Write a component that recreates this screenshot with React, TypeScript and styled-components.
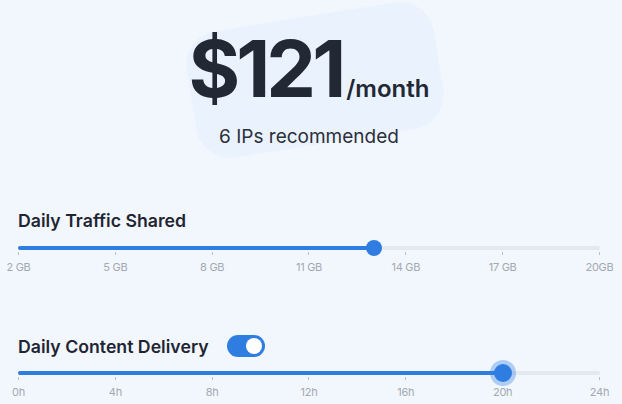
import React from "react";
import styled, { createGlobalStyle } from "styled-components";

const Global = createGlobalStyle`
  html, body { margin: 0; padding: 0; background: #f2f7fd; }
  body { font-family: Inter, "Noto Sans", sans-serif; color: #1f2532; }
  * { box-sizing: border-box; }
`;

const Page = styled.div`
  width: 622px;
  height: 404px;
  overflow: hidden;
  display: flex;
  flex-direction: column;
  padding: 0 22px 0 18px;
`;

const Hero = styled.div`
  position: relative;
  display: flex;
  flex-direction: column;
  align-items: center;
  padding-top: 29px;
  height: 206px;
`;

const Blob = styled.div`
  position: absolute;
  left: 172px;
  top: 16px;
  width: 250px;
  height: 128px;
  background: #eaf2fd;
  border-radius: 34px;
  transform: rotate(-9deg);
  z-index: 0;
`;

const PriceRow = styled.div`
  position: relative;
  z-index: 1;
  display: flex;
  align-items: baseline;
  gap: 4px;
`;

const Amount = styled.span`
  font-size: 79px;
  font-weight: 700;
  letter-spacing: -4px;
  line-height: 1;
  color: #222834;
`;

const Per = styled.span`
  font-size: 24px;
  font-weight: 600;
  color: #222834;
`;

const Sub = styled.div`
  position: relative;
  z-index: 1;
  margin-top: 17px;
  font-size: 19px;
  font-weight: 400;
  color: #2b303b;
`;

const Section = styled.div<{ h: number }>`
  display: flex;
  flex-direction: column;
  height: ${(p) => p.h}px;
`;

const TitleRow = styled.div`
  display: flex;
  align-items: center;
  gap: 18px;
  height: 28px;
`;

const Title = styled.div`
  font-size: 17.7px;
  font-weight: 600;
  color: #1f2532;
`;

const Toggle = styled.div`
  width: 38px;
  height: 22px;
  border-radius: 11px;
  background: #2f7de1;
  display: flex;
  align-items: center;
  justify-content: flex-end;
  padding: 3px;
`;

const Knob = styled.div`
  width: 16px;
  height: 16px;
  border-radius: 50%;
  background: #ffffff;
`;

const SliderWrap = styled.div<{ mt: number }>`
  position: relative;
  height: 34px;
  margin-top: ${(p) => p.mt}px;
`;

const Track = styled.div`
  position: absolute;
  left: 0;
  right: 0;
  top: 6px;
  height: 4px;
  border-radius: 2px;
  background: #e3e9f0;
`;

const Fill = styled.div`
  height: 100%;
  border-radius: 2px;
  background: #2f7de1;
`;

const Thumb = styled.div<{ halo: boolean }>`
  position: absolute;
  top: 8px;
  width: ${(p) => (p.halo ? 18 : 16)}px;
  height: ${(p) => (p.halo ? 18 : 16)}px;
  margin-left: ${(p) => (p.halo ? -9 : -8)}px;
  margin-top: ${(p) => (p.halo ? -9 : -8)}px;
  border-radius: 50%;
  background: #2f7de1;
  box-shadow: ${(p) => (p.halo ? "0 0 0 4px rgba(47,125,225,0.35)" : "none")};
`;

const Ticks = styled.div`
  position: absolute;
  left: 0;
  right: 0;
  top: 12px;
  display: flex;
  justify-content: space-between;
`;

const Tick = styled.div`
  position: relative;
  width: 1px;
  height: 3px;
  background: #b9c0ca;
`;

const TickLabel = styled.span`
  position: absolute;
  top: 8px;
  left: 50%;
  transform: translateX(-50%);
  white-space: nowrap;
  font-size: 11px;
  color: #a3a9b3;
  letter-spacing: -0.3px;
`;

type SliderProps = { labels: string[]; pct: number; halo?: boolean; mt: number };

const Slider = ({ labels, pct, halo = false, mt }: SliderProps) => (
  <SliderWrap mt={mt}>
    <Track>
      <Fill style={{ width: `${pct}%` }} />
    </Track>
    <Ticks>
      {labels.map((l) => (
        <Tick key={l}>
          <TickLabel>{l}</TickLabel>
        </Tick>
      ))}
    </Ticks>
    <Thumb halo={halo} style={{ left: `${pct}%` }} />
  </SliderWrap>
);

export default function App() {
  const traffic = ["2 GB", "5 GB", "8 GB", "11 GB", "14 GB", "17 GB", "20GB"];
  const hours = ["0h", "4h", "8h", "12h", "16h", "20h", "24h"];
  return (
    <>
      <Global />
      <Page>
        <Hero>
          <Blob />
          <PriceRow>
            <Amount>$121</Amount>
            <Per>/month</Per>
          </PriceRow>
          <Sub>6 IPs recommended</Sub>
        </Hero>
        <Section h={126}>
          <TitleRow>
            <Title>Daily Traffic Shared</Title>
          </TitleRow>
          <Slider labels={traffic} pct={((13 - 2) / 18) * 100} mt={6} />
        </Section>
        <Section h={72}>
          <TitleRow>
            <Title>Daily Content Delivery</Title>
            <Toggle>
              <Knob />
            </Toggle>
          </TitleRow>
          <Slider labels={hours} pct={(20 / 24) * 100} halo mt={5} />
        </Section>
      </Page>
    </>
  );
}
